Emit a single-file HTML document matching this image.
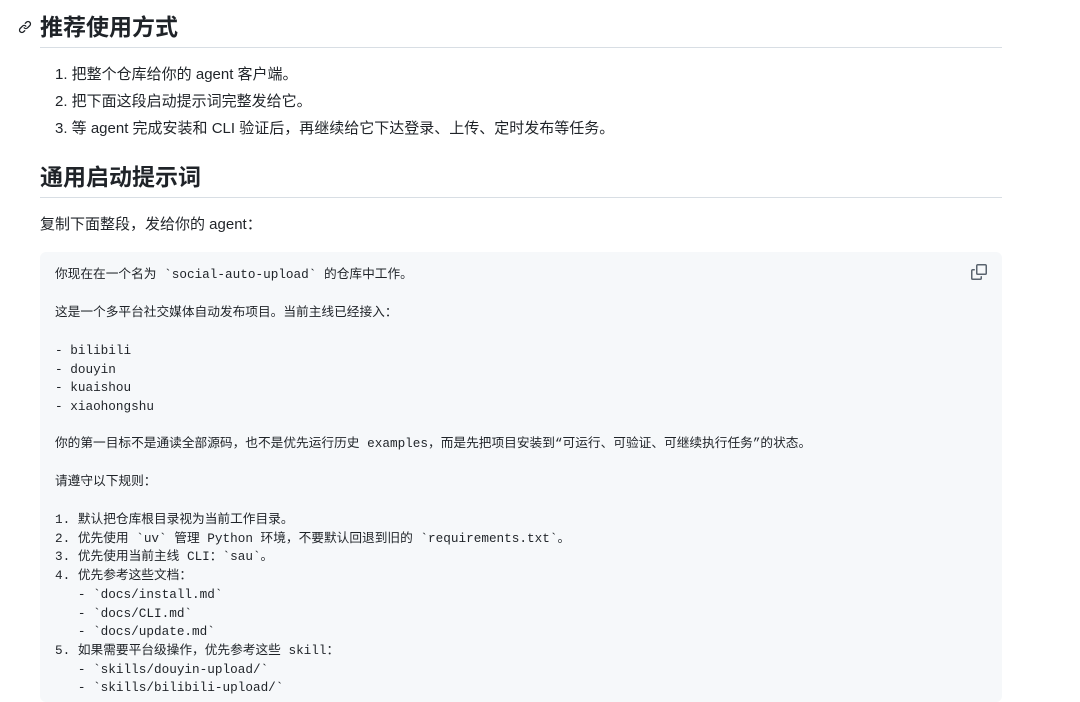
<!DOCTYPE html>
<html><head><meta charset="utf-8"><style>
body{margin:0;background:#fff;width:1080px;height:685px;overflow:hidden;font-family:"Liberation Sans","Noto Sans CJK SC",sans-serif;color:#1f2328}
.h2{position:absolute;left:40px;font-size:23px;font-weight:bold;line-height:30px}
.rule{position:absolute;left:40px;width:962px;height:1px;background:#d8dee4}
.t{position:absolute;font-size:15px;line-height:20px;white-space:nowrap}
.code{position:absolute;left:40px;top:252px;width:962px;height:450px;background:#f6f8fa;border-radius:6px}
.c{position:absolute;left:55px;font-family:"Liberation Mono","Noto Sans CJK SC",monospace;font-size:12.7px;line-height:18px;white-space:pre;color:#1f2328}
</style></head><body>
<svg style="position:absolute;left:18px;top:20px" width="14" height="14" viewBox="0 0 16 16"><path fill="#1f2328" d="m7.775 3.275 1.25-1.25a3.5 3.5 0 1 1 4.95 4.95l-2.5 2.5a3.5 3.5 0 0 1-4.95 0 .751.751 0 0 1 .018-1.042.751.751 0 0 1 1.042-.018 1.998 1.998 0 0 0 2.83 0l2.5-2.5a2.002 2.002 0 0 0-2.83-2.83l-1.25 1.25a.751.751 0 0 1-1.042-.018.751.751 0 0 1-.018-1.042Zm-4.69 9.64a1.998 1.998 0 0 0 2.83 0l1.25-1.25a.751.751 0 0 1 1.042.018.751.751 0 0 1 .018 1.042l-1.25 1.25a3.5 3.5 0 1 1-4.95-4.95l2.5-2.5a3.5 3.5 0 0 1 4.95 0 .751.751 0 0 1-.018 1.042.751.751 0 0 1-1.042.018 1.998 1.998 0 0 0-2.83 0l-2.5 2.5a1.998 1.998 0 0 0 0 2.83Z"/></svg>
<div class="h2" style="top:12px">推荐使用方式</div>
<div class="rule" style="top:47px"></div>
<div class="t" style="left:55px;top:65px">1. 把整个仓库给你的 agent 客户端。</div>
<div class="t" style="left:55px;top:92px">2. 把下面这段启动提示词完整发给它。</div>
<div class="t" style="left:55px;top:119px">3. 等 agent 完成安装和 CLI 验证后，再继续给它下达登录、上传、定时发布等任务。</div>
<div class="h2" style="top:162px">通用启动提示词</div>
<div class="rule" style="top:197px"></div>
<div class="t" style="left:40px;top:215px">复制下面整段，发给你的 agent：</div>
<div class="code"></div>
<svg style="position:absolute;left:971px;top:264px" width="16" height="16" viewBox="0 0 16 16"><path fill="#59636e" d="M0 6.75C0 5.784.784 5 1.75 5h1.5a.75.75 0 0 1 0 1.5h-1.5a.25.25 0 0 0-.25.25v7.5c0 .138.112.25.25.25h7.5a.25.25 0 0 0 .25-.25v-1.5a.75.75 0 0 1 1.5 0v1.5A1.75 1.75 0 0 1 9.25 16h-7.5A1.75 1.75 0 0 1 0 14.25Z"/><path fill="#59636e" d="M5 1.75C5 .784 5.784 0 6.75 0h7.5C15.216 0 16 .784 16 1.75v7.5A1.75 1.75 0 0 1 14.25 11h-7.5A1.75 1.75 0 0 1 5 9.25Zm1.75-.25a.25.25 0 0 0-.25.25v7.5c0 .138.112.25.25.25h7.5a.25.25 0 0 0 .25-.25v-7.5a.25.25 0 0 0-.25-.25Z"/></svg>
<div class="c" style="top:266px">你现在在一个名为 `social-auto-upload` 的仓库中工作。</div>
<div class="c" style="top:304px">这是一个多平台社交媒体自动发布项目。当前主线已经接入：</div>
<div class="c" style="top:342px;line-height:18.6px">- bilibili
- douyin
- kuaishou
- xiaohongshu</div>
<div class="c" style="top:435px">你的第一目标不是通读全部源码，也不是优先运行历史 examples，而是先把项目安装到“可运行、可验证、可继续执行任务”的状态。</div>
<div class="c" style="top:473px">请遵守以下规则：</div>
<div class="c" style="top:511px;line-height:18.7px">1. 默认把仓库根目录视为当前工作目录。
2. 优先使用 `uv` 管理 Python 环境，不要默认回退到旧的 `requirements.txt`。
3. 优先使用当前主线 CLI：`sau`。
4. 优先参考这些文档：
   - `docs/install.md`
   - `docs/CLI.md`
   - `docs/update.md`
5. 如果需要平台级操作，优先参考这些 skill：
   - `skills/douyin-upload/`
   - `skills/bilibili-upload/`</div>
</body></html>
